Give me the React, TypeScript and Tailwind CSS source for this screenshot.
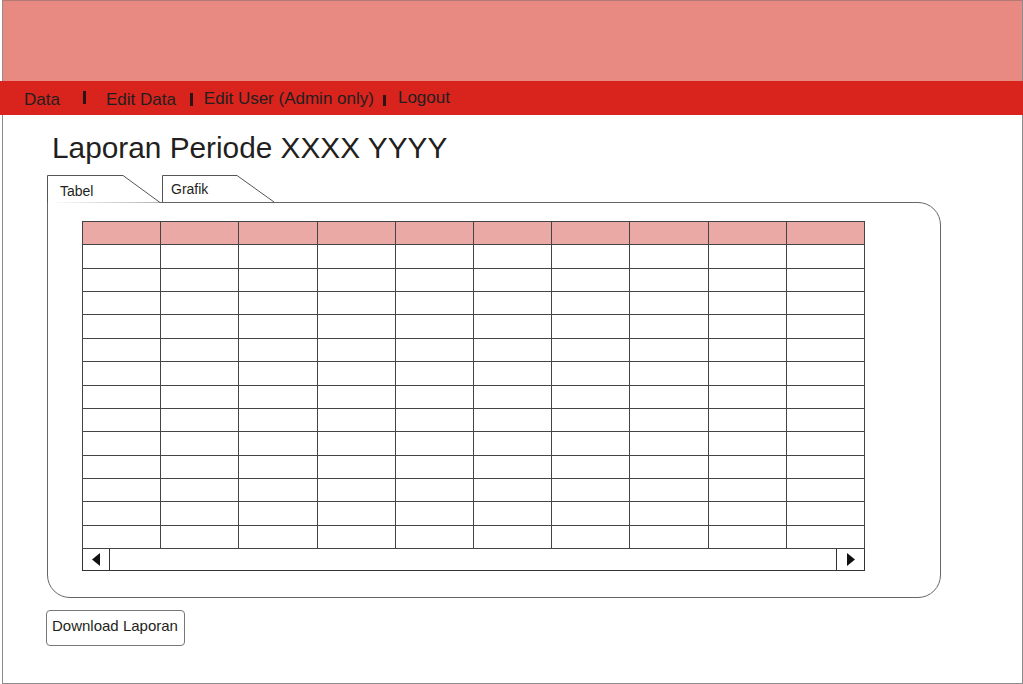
import React from "react";

const font = { fontFamily: '"Liberation Sans", Arial, sans-serif' };

function TabShape({ active }: { active: boolean }) {
  return active ? (
    <svg className="absolute left-0 top-0" width="114" height="28" viewBox="0 0 114 28">
      <path d="M0.5 28 V0.5 H76 L113 27.5" fill="#ffffff" stroke="#555555" strokeWidth="1" />
    </svg>
  ) : (
    <svg className="absolute left-0 top-0" width="114" height="27" viewBox="0 0 114 27">
      <path d="M0.5 27 V0.5 H75 L112 27" fill="#ffffff" stroke="#555555" strokeWidth="1" />
    </svg>
  );
}

export default function App() {
  const cols = Array.from({ length: 10 });
  const rows = Array.from({ length: 13 });
  return (
    <div className="w-[1023px] h-[684px] bg-white overflow-hidden" style={font}>
      <div className="ml-[2px] w-[1021px] h-[684px] border border-[#8c8c8c] border-t-[#b07a76] flex flex-col">
        <div className="h-[80px] bg-[#e98a82]" />
        <div className="-ml-[3px] w-[1024px] h-[34px] bg-[#d8241d] flex items-start text-[17px] leading-[17px] text-[#231f20]">
          <span className="ml-[24px] mt-[10px]">Data</span>
          <span className="ml-[23px] mt-[10px] w-[3px] h-[13px] bg-[#2a1414]" />
          <span className="ml-[20px] mt-[10px]">Edit Data</span>
          <span className="ml-[14px] mt-[12px] w-[3px] h-[13px] bg-[#2a1414]" />
          <span className="ml-[11px] mt-[8.5px]">Edit User (Admin only)</span>
          <span className="ml-[9px] mt-[14px] w-[3px] h-[11px] bg-[#2a1414]" />
          <span className="ml-[12px] mt-[7.5px]">Logout</span>
        </div>

        <h1 className="ml-[49px] mt-[16px] text-[29.8px] leading-[34px] text-[#231f20] font-normal">
          Laporan Periode XXXX YYYY
        </h1>

        <div className="ml-[44px] mt-[10px] flex flex-col w-[894px]">
          <div className="flex items-start h-[27px]">
            <div className="relative z-10 w-[114px] h-[28px] -mb-px">
              <TabShape active />
              <span className="relative block pl-[13px] pt-[9px] text-[14px] leading-[14px] text-[#231f20]">Tabel</span>
            </div>
            <div className="relative ml-[1px] w-[114px] h-[27px]">
              <TabShape active={false} />
              <span className="relative block pl-[9px] pt-[7px] text-[14px] leading-[14px] text-[#231f20]">Grafik</span>
            </div>
          </div>
          <div className="h-[396px] border border-[#666666] rounded-tr-[23px] rounded-br-[23px] rounded-bl-[23px] pl-[34px] pt-[18px]">
            <div className="w-[783px] border-l border-t border-[#444444]">
              <div className="grid grid-cols-10">
                {cols.map((_, i) => (
                  <div key={i} className="h-[23.36px] bg-[#eba9a6] border-r border-b border-[#444444]" />
                ))}
              </div>
              {rows.map((_, r) => (
                <div key={r} className="grid grid-cols-10">
                  {cols.map((_, i) => (
                    <div key={i} className="h-[23.36px] border-r border-b border-[#444444]" />
                  ))}
                </div>
              ))}
            </div>
            <div className="w-[783px] h-[22px] border-l border-r border-b border-[#333333] flex justify-between">
              <div className="w-[27px] h-full border-r border-[#333333] flex items-center justify-center">
                <svg width="9" height="13" viewBox="0 0 9 13">
                  <path d="M8 0 V13 L0 6.5 Z" fill="#111111" />
                </svg>
              </div>
              <div className="w-[28px] h-full border-l border-[#333333] flex items-center justify-center">
                <svg width="9" height="13" viewBox="0 0 9 13">
                  <path d="M1 0 V13 L9 6.5 Z" fill="#111111" />
                </svg>
              </div>
            </div>
          </div>
        </div>

        <button className="ml-[43px] mt-[12px] w-[139px] h-[36px] border border-[#777777] rounded-[4px] bg-white text-left pl-[5px] pt-[7px] text-[15px] leading-[15px] text-[#231f20] self-start flex items-start">
          Download Laporan
        </button>
      </div>
    </div>
  );
}
